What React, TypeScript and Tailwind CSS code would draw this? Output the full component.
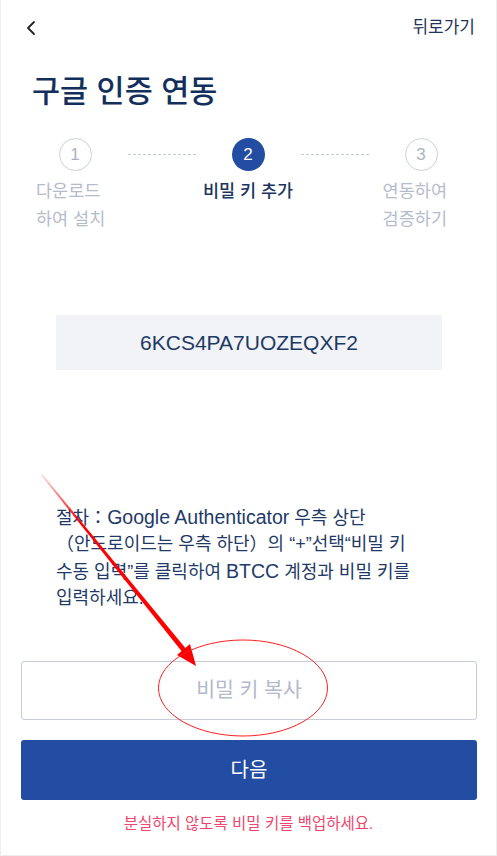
import { ChevronLeft } from 'lucide-react'

const font = { fontFamily: '"Liberation Sans", "Noto Sans CJK KR", sans-serif' }

function Step({ n, active }: { n: number; active?: boolean }) {
  return (
    <div
      className={
        active
          ? 'w-[33px] h-[33px] rounded-full bg-[#234ca3] text-white flex items-center justify-center text-[17px] shrink-0'
          : 'w-[33px] h-[33px] rounded-full border border-[#c9d0dc] text-[#aab3c4] flex items-center justify-center text-[17px] shrink-0'
      }
    >
      {n}
    </div>
  )
}

function Dashes() {
  return <div className="flex-1 mx-[36px] border-t border-dashed border-[#c3cad7]" />
}

export default function App() {
  return (
    <div
      style={font}
      className="relative w-[497px] h-[856px] bg-white border-x border-b border-[#ededed] overflow-hidden"
    >
      {/* Header */}
      <div className="flex items-center justify-between pl-[18px] pr-[21px] pt-[16px] h-[40px]">
        <ChevronLeft className="w-[24px] h-[24px] text-[#222]" strokeWidth={1.8} />
        <span className="text-[17px] text-[#1f3557]">뒤로가기</span>
      </div>

      {/* Title */}
      <h1 className="mt-[32px] ml-[31px] text-[30.5px] leading-[38px] font-medium text-[#13305d]">
        구글 인증 연동
      </h1>

      {/* Steps */}
      <div className="mt-[28px] pl-[57.5px] pr-[58.5px] flex items-center">
        <Step n={1} />
        <Dashes />
        <Step n={2} active />
        <Dashes />
        <Step n={3} />
      </div>
      <div className="mt-[6px] flex text-[17.5px] leading-[28px]">
        <div className="w-[149px] pl-[35px] text-[#b4bccb] text-left">
          다운로드
          <br />
          하여 설치
        </div>
        <div className="w-[196px] text-[#1c355f] font-medium text-center">비밀 키 추가</div>
        <div className="w-[150px] pr-[49px] text-[#b4bccb] text-right">
          연동하여
          <br />
          검증하기
        </div>
      </div>

      {/* Secret key */}
      <div className="mt-[82px] ml-[55px] mr-[54px] h-[55px] bg-[#f1f3f7] flex items-center justify-center">
        <span className="text-[21px] text-[#1d3a66]">6KCS4PA7UOZEQXF2</span>
      </div>

      {/* Instructions */}
      <p className="mt-[134px] ml-[55px] text-[18px] leading-[26.3px] text-[#1f3a68] whitespace-nowrap">
        절차：<span className="text-[19.5px]">Google Authenticator</span> 우측 상단
        <br />
        （안드로이드는 우측 하단）의 “+”선택“비밀 키
        <br />
        수동 입력”를 클릭하여 <span className="text-[19.5px]">BTCC</span> 계정과 비밀 키를
        <br />
        입력하세요.
      </p>

      {/* Copy input */}
      <div className="absolute left-[20px] right-[19px] top-[661px] h-[59px] border border-[#c6ccd9] rounded-[3px] flex items-center justify-center">
        <span className="text-[20.5px] text-[#b2bacb]">비밀 키 복사</span>
      </div>

      {/* Next button */}
      <button className="absolute left-[20px] right-[19px] top-[740px] h-[60px] bg-[#234ca3] rounded-[3px] text-white text-[20px]">
        다음
      </button>

      <p className="absolute left-0 right-0 top-[812px] text-center text-[15.5px] text-[#f0466d]">
        분실하지 않도록 비밀 키를 백업하세요.
      </p>

      {/* Annotation overlay */}
      <svg className="absolute left-0 top-0 pointer-events-none" width="497" height="856">
        <defs>
          <linearGradient id="fade" x1="40" y1="475" x2="195" y2="665" gradientUnits="userSpaceOnUse">
            <stop offset="0" stopColor="#ff0000" stopOpacity="0.15" />
            <stop offset="0.25" stopColor="#ff0000" stopOpacity="1" />
            <stop offset="1" stopColor="#ff0000" stopOpacity="1" />
          </linearGradient>
        </defs>
        <polygon points="40,475 41,474 186,650 182,653" fill="url(#fade)" />
        <polygon points="195,666 176,655 189,644" fill="#ff0000" />
        <ellipse cx="242" cy="688" rx="84.5" ry="48" fill="none" stroke="#ff2020" strokeWidth="1" />
      </svg>
    </div>
  )
}
